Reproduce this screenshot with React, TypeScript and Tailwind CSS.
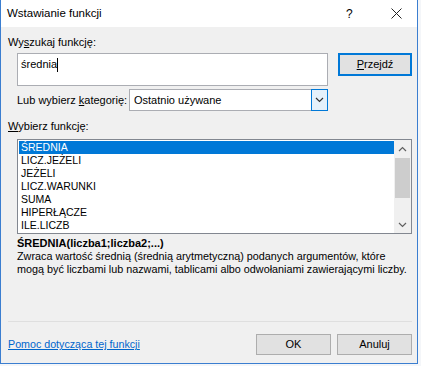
import React from "react";

const FUNCTIONS = ["ŚREDNIA", "LICZ.JEŻELI", "JEŻELI", "LICZ.WARUNKI", "SUMA", "HIPERŁĄCZE", "ILE.LICZB"];

function Chevron({ up = false, className = "" }: { up?: boolean; className?: string }) {
  return (
    <svg width="9" height="6" viewBox="0 0 9 6" className={className}>
      <path d={up ? "M1 5 L4.5 1.5 L8 5" : "M1 1 L4.5 4.5 L8 1"} fill="none" stroke="currentColor" strokeWidth="1.2" />
    </svg>
  );
}

export default function App() {
  return (
    <div className="w-[421px] h-[366px] bg-[#f4f6f9] font-['Liberation_Sans',Arial,sans-serif] text-black">
      <div className="w-[418px] h-[364px] border-x border-b border-[#3b7ed0] bg-[#f0f0f0] flex flex-col">
        {/* title bar */}
        <div className="h-[27px] bg-white flex items-center pl-[6px] shrink-0">
          <span className="text-[11.5px]">Wstawianie funkcji</span>
          <span className="ml-auto text-[12px] w-[10px] mr-[35px]">?</span>
          <svg width="11" height="11" viewBox="0 0 11 11" className="mr-[15px]">
            <path d="M0.5 0.5 L10.5 10.5 M10.5 0.5 L0.5 10.5" stroke="#222" strokeWidth="1" />
          </svg>
        </div>

        <div className="flex flex-col pl-[7px] pr-[5px] text-[11px]">
          <div className="mt-[7px] h-[16px] leading-[16px]">
            Wy<u>s</u>zukaj funkcję:
          </div>

          <div className="mt-[3px] flex items-start">
            <div className="ml-[9px] w-[311px] h-[33px] bg-white border border-[#abadb3] pl-[3px] pt-[3px] flex items-start">
              <span className="leading-[15px]">średnia</span>
              <span className="w-px h-[14px] bg-black mt-[1px]" />
            </div>
            <button className="ml-[10px] w-[74px] h-[23px] bg-[#e1e1e1] border-2 border-[#0078d7] text-[11px] leading-none">
              <u>P</u>rzejdź
            </button>
          </div>

          <div className="mt-[3px] flex items-center">
            <span className="ml-[9px] w-[112px]">
              Lub wybierz <u>k</u>ategorię:
            </span>
            <div className="w-[199px] h-[22px] bg-white border border-[#abadb3] flex items-center">
              <span className="pl-[4px] flex-1">Ostatnio używane</span>
              <div className="w-[17px] h-[22px] -mr-px -my-px bg-[#e5f1fb] border border-[#0078d7] flex items-center justify-center text-[#333]">
                <Chevron />
              </div>
            </div>
          </div>

          <div className="mt-[7px] h-[16px] leading-[16px]">
            <u>W</u>ybierz funkcję:
          </div>

          <div className="mt-[5px] ml-[9px] w-[395px] h-[95px] bg-white border border-[#828790] flex">
            <ul className="flex-1 pt-px pl-px text-[10.5px]">
              {FUNCTIONS.map((f, i) => (
                <li
                  key={f}
                  className={
                    i === 0
                      ? "h-[13px] leading-[13px] pl-[2px] bg-[#0078d7] text-white"
                      : "h-[13px] leading-[13px] pl-[2px]"
                  }
                >
                  {f}
                </li>
              ))}
            </ul>
            <div className="w-[17px] bg-[#f0f0f0] flex flex-col items-center text-[#606060]">
              <div className="h-[17px] flex items-center justify-center">
                <Chevron up />
              </div>
              <div className="mt-px w-[15px] h-[40px] bg-[#cdcdcd]" />
              <div className="mt-auto h-[17px] flex items-center justify-center">
                <Chevron />
              </div>
            </div>
          </div>

          <div className="mt-[2px] ml-[9px] h-[14px] leading-[14px] font-bold">ŚREDNIA(liczba1;liczba2;...)</div>
          <p className="ml-[9px] leading-[13px] whitespace-nowrap text-[10.8px]">
            Zwraca wartość średnią (średnią arytmetyczną) podanych argumentów, które
            <br />
            mogą być liczbami lub nazwami, tablicami albo odwołaniami zawierającymi liczby.
          </p>

          <div className="mt-[45px] h-px bg-[#dfdfdf]" />

          <div className="mt-[12px] flex items-center">
            <a href="#" className="text-[#0066cc] underline text-[10.7px]">
              Pomoc dotycząca tej funkcji
            </a>
            <button className="ml-auto w-[75px] h-[21px] bg-[#e1e1e1] border border-[#adadad]">OK</button>
            <button className="ml-[6px] w-[75px] h-[21px] bg-[#e1e1e1] border border-[#adadad]">Anuluj</button>
          </div>
        </div>
      </div>
    </div>
  );
}
